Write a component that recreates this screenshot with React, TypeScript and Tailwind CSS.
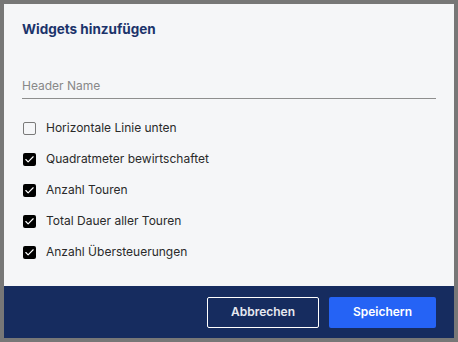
import { Check } from "lucide-react";

const items = [
  { label: "Horizontale Linie unten", checked: false },
  { label: "Quadratmeter bewirtschaftet", checked: true },
  { label: "Anzahl Touren", checked: true },
  { label: "Total Dauer aller Touren", checked: true },
  { label: "Anzahl Übersteuerungen", checked: true },
];

export default function App() {
  return (
    <div className="w-[458px] h-[342px] bg-[#777777] p-1 font-['Inter',sans-serif]">
      <div className="w-[450px] h-[334px] bg-[#f5f6f8] flex flex-col">
        <div className="flex-1 px-[18px] pt-[15px]">
          <h2 className="text-[13.5px] font-bold text-[#1b336b] leading-[20px]">
            Widgets hinzufügen
          </h2>

          <div className="mt-[33px] border-b border-[#8e8e8e] pb-[2px]">
            <span className="text-[12px] text-[#888888] leading-[18px]">Header Name</span>
          </div>

          <ul className="mt-[20px] flex flex-col gap-[13px]">
            {items.map((item) => (
              <li key={item.label} className="flex items-center gap-[10px] h-[18px]">
                {item.checked ? (
                  <span className="ml-px w-[13px] h-[13px] rounded-[2px] bg-black flex items-center justify-center">
                    <Check size={11} strokeWidth={2.5} color="white" />
                  </span>
                ) : (
                  <span className="ml-px w-[13px] h-[13px] rounded-[2px] border-[1.5px] border-[#7a7a7a]" />
                )}
                <span className="text-[12px] text-[#2a2a2a]">{item.label}</span>
              </li>
            ))}
          </ul>
        </div>

        <div className="h-[52px] bg-[#162c5f] flex items-center justify-end gap-[10px] pr-[18px]">
          <button className="w-[112px] h-[31px] border border-white rounded-[2px] text-[12px] font-semibold text-[#e6e9f0]">
            Abbrechen
          </button>
          <button className="w-[107px] h-[31px] bg-[#2563f5] rounded-[2px] text-[12px] font-semibold text-white">
            Speichern
          </button>
        </div>
      </div>
    </div>
  );
}
